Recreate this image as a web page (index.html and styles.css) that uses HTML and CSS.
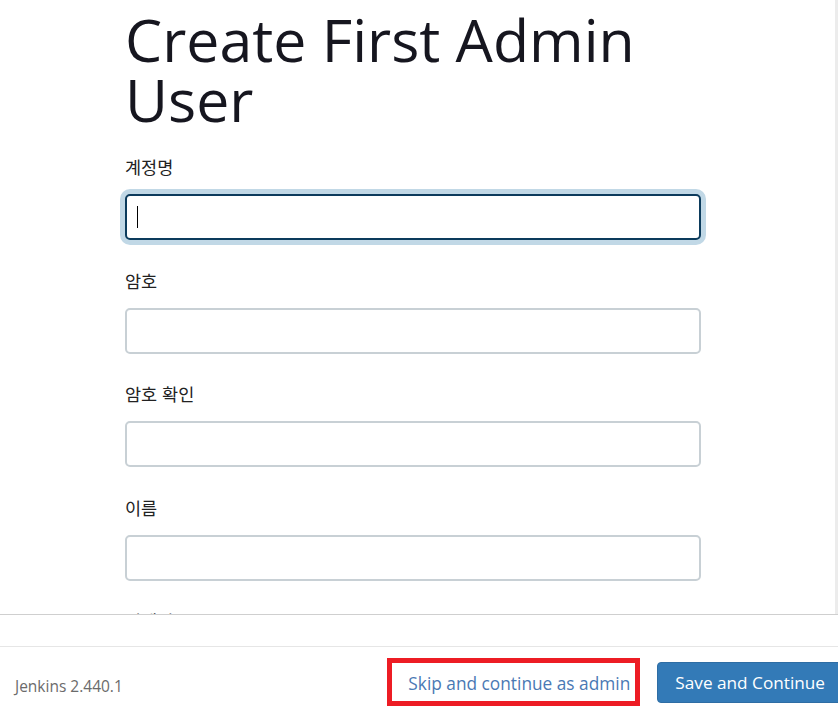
FILE: index.html
```html
<!DOCTYPE html>
<html lang="ko">
<head>
<meta charset="utf-8">
<title>Create First Admin User</title>
<link rel="stylesheet" href="styles.css">
</head>
<body>
<div class="wizard">
  <div class="modal-body">
    <div class="content">
      <h1 class="title">Create First Admin User</h1>
      <div class="field">
        <div class="label">계정명</div>
        <div class="input focused"><span class="caret"></span></div>
      </div>
      <div class="field">
        <div class="label">암호</div>
        <div class="input"></div>
      </div>
      <div class="field">
        <div class="label">암호 확인</div>
        <div class="input"></div>
      </div>
      <div class="field">
        <div class="label">이름</div>
        <div class="input"></div>
      </div>
      <div class="field">
        <div class="label">이메일 주소</div>
        <div class="input"></div>
      </div>
    </div>
    <div class="scrolltrack"></div>
  </div>
  <div class="spacer"></div>
  <div class="footer">
    <span class="version">Jenkins 2.440.1</span>
    <span class="grow"></span>
    <span class="highlight"><a class="skip">Skip and continue as admin</a></span>
    <button class="save">Save and Continue</button>
  </div>
</div>
</body>
</html>
```

FILE: styles.css
```css
html, body {
  margin: 0;
  padding: 0;
  background: #ffffff;
}
body {
  width: 838px;
  height: 717px;
  overflow: hidden;
  font-family: "Open Sans", "Noto Sans CJK KR", sans-serif;
}
.wizard {
  display: flex;
  flex-direction: column;
  height: 717px;
}
.modal-body {
  height: 614px;
  flex: none;
  display: flex;
  overflow: hidden;
  border-bottom: 1px solid #cfcfcf;
}
.content {
  flex: 1;
  padding: 9px 0 0 125px;
}
.scrolltrack {
  width: 3px;
  background: #ececec;
}
.title {
  width: 576px;
  margin: 0 0 25px 0;
  font-family: "Open Sans", sans-serif;
  font-weight: 400;
  font-size: 59px;
  line-height: 60px;
  color: #16161f;
}
.field {
  width: 576px;
  margin-bottom: 27.5px;
}
.label {
  font-family: "Noto Sans CJK KR", sans-serif;
  font-size: 17.5px;
  line-height: 26px;
  color: #222;
  margin-bottom: 14px;
}
.input {
  box-sizing: border-box;
  height: 46px;
  border: 2px solid #c8d0d5;
  border-radius: 5px;
  background: #fff;
  display: flex;
  align-items: center;
  padding-left: 10px;
}
.input.focused {
  border-color: #0c3b5c;
  box-shadow: 0 0 0 5px #c1d8e6;
}
.caret {
  width: 1px;
  height: 22px;
  background: #000;
}
.spacer {
  height: 31px;
  flex: none;
  border-bottom: 1px solid #e6e6e6;
}
.footer {
  flex: 1;
  display: flex;
  align-items: center;
  overflow: hidden;
  padding-left: 15px;
}
.version {
  font-size: 15.5px;
  color: #6b6b6b;
  padding-top: 8px;
}
.grow {
  flex: 1;
}
.highlight {
  box-sizing: border-box;
  width: 253px;
  height: 48px;
  border: 5px solid #ed1c24;
  display: flex;
  align-items: center;
  padding: 2px 0 0 16px;
  margin-right: 17px;
}
.skip {
  font-size: 17.3px;
  color: #4a79b4;
  white-space: nowrap;
}
.save {
  flex: none;
  height: 41px;
  margin-right: -5px;
  padding: 0 17px;
  border: 1px solid #2e6da4;
  border-radius: 4px;
  background: #337ab7;
  color: #fff;
  font-family: "Open Sans", sans-serif;
  font-size: 17.2px;
  white-space: nowrap;
}
```
